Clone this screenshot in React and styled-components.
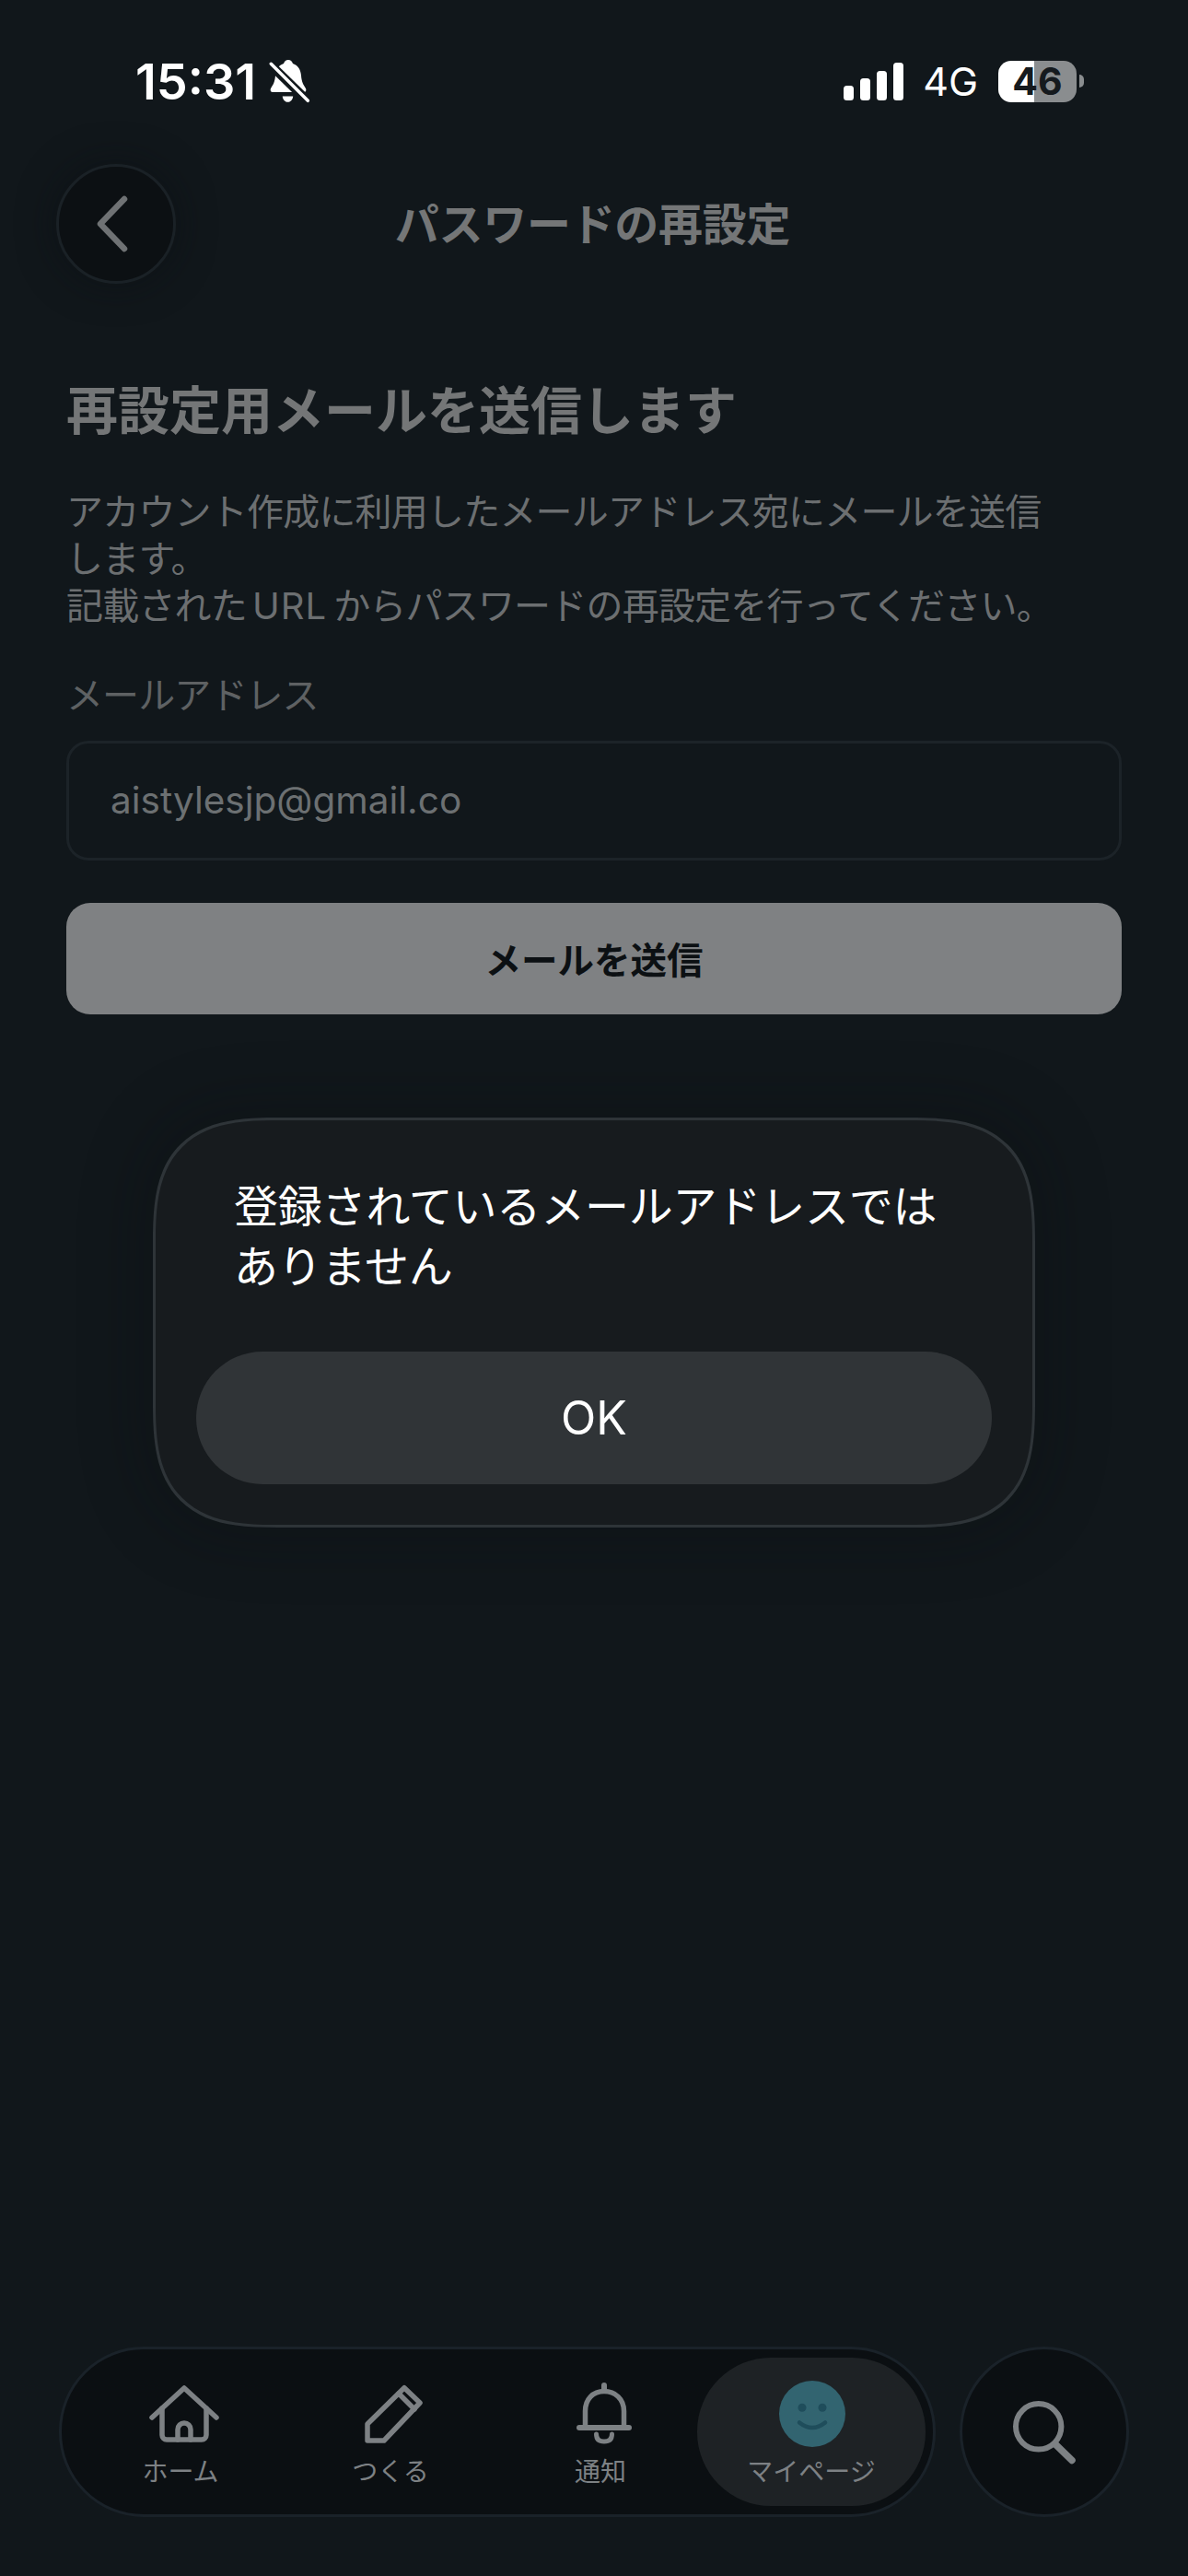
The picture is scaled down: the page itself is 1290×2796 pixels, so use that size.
import React from "react";
import styled, { createGlobalStyle } from "styled-components";

const FONT = `Inter, "Noto Sans CJK JP", sans-serif`;

const GlobalStyle = createGlobalStyle`
  html, body {
    margin: 0;
    padding: 0;
    background: #11171b;
  }
`;

const BellOffIcon = () => (
  <svg width="46" height="50" viewBox="0 0 46 50">
    <path
      d="M21 2c2.5 0 4 1.5 5 4c6 2 8.5 7 9 13c.5 7 2.5 10 5 14c1 2 0 4-2 4H4c-2 0-3-2-2-4c2.500-4 4.500-7 5-14c.5-6 3-11 9-13c1-2.500 2.500-4 5-4z"
      fill="#fff"
    />
    <path d="M14.700 41.500h11.500c-.5 4-3 6.300-5.700 6.300s-5.300-2.300-5.800-6.300z" fill="#fff" />
    <path d="M1 6.500l42 41" stroke="#11171b" strokeWidth="10" />
    <path d="M2.300 6.300l40 40" stroke="#fff" strokeWidth="3.500" strokeLinecap="round" />
  </svg>
);

const SignalIcon = () => (
  <svg width="65" height="41" viewBox="0 0 65 41" fill="#fff">
    <rect x="0" y="25" width="11" height="16" rx="3.5" />
    <rect x="18" y="17" width="11" height="24" rx="3.5" />
    <rect x="36" y="9" width="11" height="32" rx="3.5" />
    <rect x="54" y="0" width="11" height="41" rx="3.5" />
  </svg>
);

const ChevronIcon = () => (
  <svg width="40" height="64" viewBox="0 0 40 64" fill="none">
    <path d="M34 5L8 32l26 27" stroke="#6f7274" strokeWidth="6.5" strokeLinecap="round" strokeLinejoin="round" />
  </svg>
);

const HomeIcon = () => (
  <svg width="76" height="64" viewBox="0 0 76 64" fill="none" stroke="#7d8184" strokeWidth="5.5" strokeLinecap="round" strokeLinejoin="round">
    <path d="M3 36L38 4l35 32" />
    <path d="M14 26v29a5 5 0 0 0 5 5h38a5 5 0 0 0 5-5V26" />
    <path d="M31 60V49a7 7 0 0 1 14 0v11" />
  </svg>
);

const PenIcon = () => (
  <svg width="66" height="66" viewBox="0 0 66 66" fill="none" stroke="#7d8184" strokeWidth="5.500" strokeLinecap="round" strokeLinejoin="round">
    <path d="M4 62V44L44 4.700 61 21 22 62z" />
    <path d="M38 11l17 17" />
  </svg>
);

const BellIcon = () => (
  <svg width="62" height="68" viewBox="0 0 62 68" fill="none" stroke="#7d8184" strokeLinecap="round">
    <path d="M31 3v6" strokeWidth="6" />
    <path d="M10.500 49V31C10.500 18 19 9.500 31 9.500S52.500 18 52.500 31v18" strokeWidth="5.500" />
    <path d="M4 49h54" strokeWidth="6" />
    <path d="M22.500 56c0 6 3.500 8 8.500 8s8.500-2 8.500-8" strokeWidth="5" />
  </svg>
);

const SmileIcon = () => (
  <svg width="72" height="72" viewBox="0 0 72 72">
    <circle cx="36" cy="36" r="36" fill="#326470" />
    <circle cx="25" cy="29.300" r="4.500" fill="#1f4d5b" />
    <circle cx="47" cy="29.300" r="4.500" fill="#1f4d5b" />
    <path d="M22 45.500Q36 56.500 50 45.500" fill="none" stroke="#1f4d5b" strokeWidth="4.500" strokeLinecap="round" />
  </svg>
);

const SearchIcon = () => (
  <svg width="68" height="70" viewBox="0 0 68 70" fill="none" stroke="#7d8184" strokeLinecap="round">
    <circle cx="27.700" cy="28.800" r="24.700" strokeWidth="6" />
    <path d="M46 48l18 17.500" strokeWidth="7.500" />
  </svg>
);

const tabs = [
  { label: "ホーム", icon: <HomeIcon /> },
  { label: "つくる", icon: <PenIcon /> },
  { label: "通知", icon: <BellIcon /> },
  { label: "マイページ", icon: <SmileIcon />, active: true },
];

export default function App() {
  return (
    <Page>
      <GlobalStyle />
      <StatusBar>
        <StatusLeft>
          <Time>15:31</Time>
          <BellOffIcon />
        </StatusLeft>
        <StatusRight>
          <SignalIcon />
          <Network>4G</Network>
          <Battery>
            <BatteryBody>46</BatteryBody>
            <BatteryCap />
          </Battery>
        </StatusRight>
      </StatusBar>

      <Header>
        <BackButton>
          <ChevronIcon />
        </BackButton>
        <Title>パスワードの再設定</Title>
      </Header>

      <Content>
        <Heading>再設定用メールを送信します</Heading>
        <Description>
          アカウント作成に利用したメールアドレス宛にメールを送信します。
          <br />
          記載された<Latin>URL</Latin>からパスワードの再設定を行ってください。
        </Description>
        <Label>メールアドレス</Label>
        <Field>aistylesjp@gmail.co</Field>
        <SendButton>メールを送信</SendButton>
      </Content>

      <Dialog>
        <DialogText>登録されているメールアドレスではありません</DialogText>
        <OkButton>OK</OkButton>
      </Dialog>

      <NavRow>
        <TabBar>
          {tabs.map((tab) => (
            <Tab key={tab.label} $active={tab.active}>
              <TabIcon $active={tab.active}>{tab.icon}</TabIcon>
              <TabLabel>{tab.label}</TabLabel>
            </Tab>
          ))}
        </TabBar>
        <SearchButton>
          <SearchIcon />
        </SearchButton>
      </NavRow>
    </Page>
  );
}

const Page = styled.div`
  position: relative;
  width: 1290px;
  height: 2796px;
  display: flex;
  flex-direction: column;
  overflow: hidden;
  background: #11171b;
  font-family: ${FONT};
`;

const StatusBar = styled.div`
  height: 64px;
  margin-top: 56px;
  padding: 0 113px 0 147px;
  display: flex;
  align-items: center;
  justify-content: space-between;
  color: #fff;
`;

const StatusLeft = styled.div`
  display: flex;
  align-items: center;
  gap: 14px;
`;

const Time = styled.span`
  font-size: 54px;
  font-weight: 600;
  letter-spacing: 0;
`;

const StatusRight = styled.div`
  display: flex;
  align-items: center;
`;

const Network = styled.span`
  margin: 0 22px 0 21px;
  font-size: 43px;
  font-weight: 400;
`;

const Battery = styled.div`
  display: flex;
  align-items: center;
  gap: 3px;
`;

const BatteryBody = styled.div`
  width: 85px;
  height: 45px;
  display: flex;
  align-items: center;
  justify-content: center;
  border-radius: 14px;
  background: linear-gradient(90deg, #fff 0 39px, #8a8d8f 39px);
  color: #151a1e;
  font-size: 41px;
  font-weight: 700;
`;

const BatteryCap = styled.div`
  width: 5px;
  height: 14px;
  border-radius: 0 7px 7px 0;
  background: #8a8d8f;
`;

const Header = styled.div`
  height: 131px;
  margin-top: 57px;
  padding: 0 61px;
  display: grid;
  grid-template-columns: 130px 1fr 130px;
  align-items: center;
`;

const BackButton = styled.div`
  width: 130px;
  height: 130px;
  box-sizing: border-box;
  display: flex;
  align-items: center;
  justify-content: center;
  padding-right: 10px;
  border: 3px solid #1a2126;
  border-radius: 50%;
  background: #0c1013;
  box-shadow: 0 0 40px rgba(10, 14, 17, 0.5);
`;

const Title = styled.h1`
  margin: 0;
  padding: 0 3px 6px 0;
  text-align: center;
  font-size: 48px;
  font-weight: 700;
  letter-spacing: -0.3px;
  color: #747677;
`;

const Content = styled.div`
  padding: 0 72px;
  display: flex;
  flex-direction: column;
`;

const Heading = styled.h2`
  margin: 102px 0 0;
  font-size: 56px;
  line-height: 72px;
  font-weight: 700;
  color: #747677;
`;

const Description = styled.p`
  margin: 48px 0 0;
  max-width: 1090px;
  font-size: 40px;
  line-height: 51px;
  font-weight: 400;
  letter-spacing: -0.8px;
  color: #6c6f71;
`;

const Latin = styled.span`
  margin: 0 7px 0 6px;
  letter-spacing: 1px;
`;

const Label = styled.div`
  margin-top: 46px;
  font-size: 40px;
  line-height: 52px;
  letter-spacing: -0.9px;
  color: #5e6163;
`;

const Field = styled.div`
  height: 130px;
  margin-top: 23px;
  box-sizing: border-box;
  padding: 0 0 2px 45px;
  display: flex;
  align-items: center;
  border: 3px solid #1c2328;
  border-radius: 24px;
  font-size: 40.5px;
  color: #6c7072;
`;

const SendButton = styled.div`
  height: 121px;
  margin-top: 46px;
  box-sizing: border-box;
  padding-bottom: 3px;
  display: flex;
  align-items: center;
  justify-content: center;
  border-radius: 26px;
  background: #7f8183;
  color: #0c1013;
  font-size: 39.5px;
  font-weight: 700;
`;

const Dialog = styled.div`
  position: absolute;
  left: 166px;
  top: 1213px;
  width: 958px;
  height: 445px;
  box-sizing: border-box;
  padding: 61px 44px 44px;
  display: flex;
  flex-direction: column;
  justify-content: space-between;
  border: 3px solid #2e3438;
  border-radius: 136px;
  corner-shape: superellipse(1.5);
  background: #171b1e;
  box-shadow: 0 0 70px 10px rgba(9, 12, 15, 0.3);
`;

const DialogText = styled.p`
  margin: 0;
  padding: 0 41px;
  font-size: 48px;
  line-height: 65px;
  letter-spacing: -0.2px;
  color: #fff;
`;

const OkButton = styled.div`
  height: 144px;
  display: flex;
  align-items: center;
  justify-content: center;
  border-radius: 72px;
  background: #303437;
  color: #fff;
  font-size: 50px;
  font-weight: 400;
`;

const NavRow = styled.div`
  margin-top: auto;
  margin-bottom: 64px;
  padding: 0 64px;
  display: flex;
  align-items: center;
  justify-content: space-between;
`;

const TabBar = styled.div`
  width: 952px;
  height: 185px;
  box-sizing: border-box;
  padding: 9px 8px 9px 15px;
  display: grid;
  grid-template-columns: 228px 228px 219px 248px;
  border: 3px solid #1a2229;
  border-radius: 92px;
  background: #0b0f12;
`;

const Tab = styled.div`
  display: flex;
  flex-direction: column;
  align-items: center;
  padding-top: 24px;
  border-radius: 80px;
  background: ${(p) => (p.$active ? "#1e2225" : "transparent")};

  &:nth-child(3) {
    margin-right: -9px;
  }
`;

const TabIcon = styled.div`
  height: 74px;
  padding-left: ${(p) => (p.$active ? "2px" : "8px")};
  display: flex;
  align-items: center;
  justify-content: center;
`;

const TabLabel = styled.span`
  margin-top: 8px;
  font-size: 28px;
  line-height: 36px;
  color: #7d8184;
`;

const SearchButton = styled.div`
  width: 184px;
  height: 185px;
  box-sizing: border-box;
  display: flex;
  align-items: center;
  justify-content: center;
  border: 3px solid #1a2229;
  border-radius: 50%;
  background: #0b0f12;
`;
